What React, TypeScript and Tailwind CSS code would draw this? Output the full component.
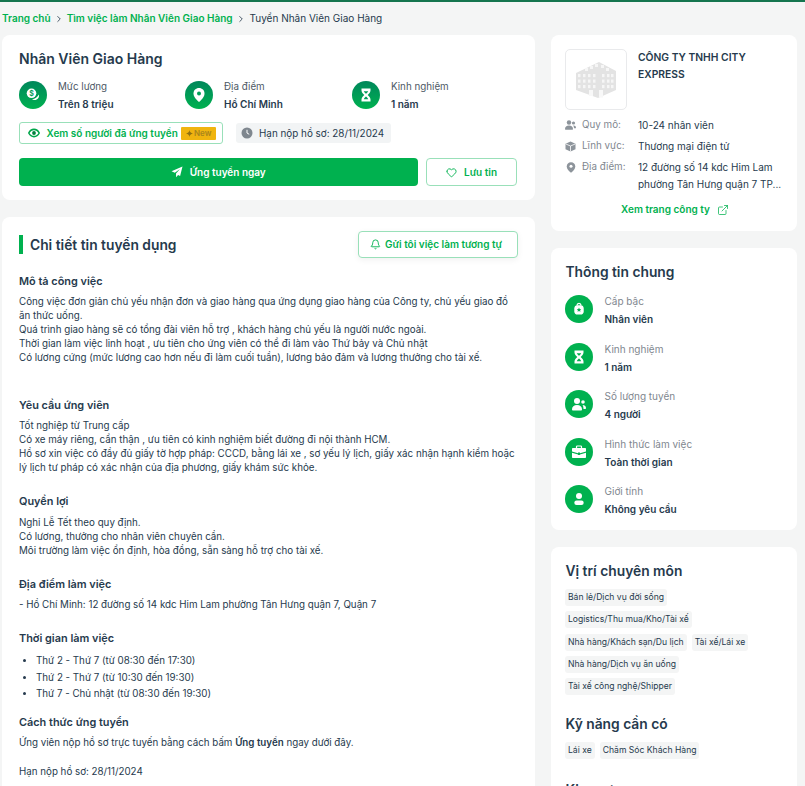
import React from "react";
import { Heart, Bell, ExternalLink, ChevronRight } from "lucide-react";

function Circle({ children, grad = false }: { children: React.ReactNode; grad?: boolean }) {
  return (
    <div
      className={
        grad
          ? "w-[28px] h-[28px] rounded-full shrink-0 flex items-center justify-center bg-gradient-to-b from-[#00875a] to-[#00b14f]"
          : "w-[28px] h-[28px] rounded-full shrink-0 flex items-center justify-center bg-[#00b14f]"
      }
    >
      {children}
    </div>
  );
}

const Money = () => (
  <svg width="16" height="16" viewBox="0 0 16 16">
    <circle cx="6.500" cy="6.300" r="4.800" fill="#fff" />
    <text x="6.500" y="8.800" fontSize="7" fontWeight="700" textAnchor="middle" fill="#00a05a" fontFamily="Inter">$</text>
    <path d="M13.800 7.500c1 2.800-1.400 5.800-4.500 5.600-1-.1-1.700-.4-2.300-.9 2.900.1 5.500-2 6.800-4.700z" fill="#fff" />
  </svg>
);
const Pin = () => (
  <svg width="14" height="16" viewBox="0 0 14 16">
    <path d="M7 1c3.200 0 5.500 2.400 5.500 5.400 0 3.200-3 6.600-5.500 8.600C4.500 13 1.500 9.600 1.500 6.400 1.500 3.400 3.800 1 7 1z" fill="#fff" />
    <circle cx="7" cy="6.500" r="2" fill="#00a05a" />
  </svg>
);
const Hourglass = ({ c = "#00a05a" }: { c?: string }) => (
  <svg width="14" height="16" viewBox="0 0 14 16">
    <path d="M2.500 1.500h9v2c0 2-1.500 3.200-2.800 4.500 1.300 1.300 2.800 2.500 2.800 4.500v2h-9v-2c0-2 1.500-3.200 2.800-4.500C4 6.700 2.500 5.500 2.500 3.500z" fill="#fff" />
    <path d="M4.800 4.200h4.400c-.3.900-1.300 1.700-2.200 2.500-.9-.8-1.900-1.600-2.200-2.500zM4.800 12.300c.3-1 1.300-1.900 2.200-2.700.9.800 1.900 1.700 2.200 2.700z" fill={c} />
  </svg>
);
const Rank = () => (
  <svg width="12" height="14" viewBox="0 0 14 16">
    <path d="M4.500 4C4.700 2.300 5.500 1.500 7 1.500s2.300.8 2.500 2.500" fill="none" stroke="#fff" strokeWidth="1.400" />
    <rect x="1.500" y="3.500" width="11" height="11" rx="4" fill="#fff" />
    <path d="M7 6.300l.8 1.700 1.800.2-1.300 1.200.4 1.800L7 10.300l-1.700.9.400-1.800-1.300-1.200 1.800-.2z" fill="#00b14f" />
  </svg>
);
const People = () => (
  <svg width="16" height="16" viewBox="0 0 16 16">
    <circle cx="6" cy="5" r="3" fill="#fff" />
    <path d="M1 13.500c0-3 2-4.500 5-4.500s5 1.500 5 4.500c0 .5-.5 1-1 1H2c-.5 0-1-.5-1-1z" fill="#fff" />
    <circle cx="12" cy="6" r="1.800" fill="#fff" />
    <path d="M11.500 9c2 0 3.500 1 3.500 3 0 .5-.3 1-.8 1H12.500c0-1.500-.3-3-1-4z" fill="#fff" />
  </svg>
);
const Case = () => (
  <svg width="16" height="16" viewBox="0 0 16 16">
    <path d="M5.500 4V2.800c0-.5.4-.8.800-.8h3.400c.4 0 .8.300.8.800V4" fill="none" stroke="#fff" strokeWidth="1.200" />
    <path d="M2 4h12c.6 0 1 .4 1 1v2.500L9 9.200V8.500H7v.7L1 7.500V5c0-.6.400-1 1-1z" fill="#fff" />
    <path d="M1 8.700l6 1.700v.6h2v-.6l6-1.700V13c0 .6-.4 1-1 1H2c-.6 0-1-.4-1-1z" fill="#fff" />
  </svg>
);
const Person = () => (
  <svg width="14" height="16" viewBox="0 0 14 16">
    <circle cx="7" cy="5" r="3" fill="#fff" />
    <rect x="2.300" y="9.500" width="9.400" height="4.500" rx="2.250" fill="#fff" />
  </svg>
);
const EyeSolid = () => (
  <svg width="12" height="12" viewBox="0 0 12 12">
    <path d="M.8 6C2 3.600 3.800 2.400 6 2.400S10 3.600 11.200 6C10 8.400 8.200 9.600 6 9.600S2 8.400.8 6z" fill="none" stroke="#00a54a" strokeWidth="1.600" />
    <circle cx="6" cy="6" r="1.900" fill="#00813c" />
  </svg>
);
const Plane = () => (
  <svg width="12" height="12" viewBox="0 0 12 12">
    <path d="M11.500.5L.5 5.200l3.300 1.600L9 3 5 7.500l.1 3.800 2-2.300 2 1z" fill="#fff" />
  </svg>
);
const ClockSolid = () => (
  <svg width="12" height="12" viewBox="0 0 12 12">
    <circle cx="6" cy="6" r="5.500" fill="#7f878f" />
    <path d="M6 2.800V6l2.200 1.300" fill="none" stroke="#fff" strokeWidth="1" />
  </svg>
);
const SmUsers = () => (
  <svg width="11" height="10" viewBox="0 0 11 10">
    <circle cx="4" cy="2.500" r="2.200" fill="#8d949b" />
    <path d="M0 9c0-2.300 1.500-3.500 4-3.500S8 6.700 8 9c0 .4-.2.700-.6.700H.6C.2 9.700 0 9.400 0 9z" fill="#8d949b" />
    <circle cx="8.500" cy="3" r="1.600" fill="#8d949b" />
    <path d="M8.500 5.500c1.500 0 2.500.8 2.500 2.200 0 .4-.2.600-.6.600H9c0-1-.2-2-.9-2.800z" fill="#8d949b" />
  </svg>
);
const SmBox = () => (
  <svg width="11" height="11" viewBox="0 0 11 11">
    <path d="M5.500.5l5 2.200v5.600l-5 2.200-5-2.200V2.700z" fill="#8d949b" />
    <path d="M.8 3l4.700 2 4.700-2M5.500 5v5.500" fill="none" stroke="#fff" strokeWidth=".8" />
  </svg>
);
const SmPin = () => (
  <svg width="10" height="11" viewBox="0 0 10 11">
    <path d="M5 .3c2.500 0 4.300 1.800 4.300 4.100C9.300 6.800 7 9.200 5 10.800 3 9.200.7 6.800.7 4.400.7 2.100 2.500.3 5 .3z" fill="#8d949b" />
    <circle cx="5" cy="4.300" r="1.500" fill="#fff" />
  </svg>
);
const Spark = () => (
  <svg width="7" height="7" viewBox="0 0 8 8" className="shrink-0">
    <path d="M4 0c.2 2.200 1.400 3.700 4 4-2.600.3-3.800 1.800-4 4-.2-2.200-1.400-3.700-4-4 2.600-.3 3.800-1.800 4-4z" fill="#8f7012" />
  </svg>
);
const Building = () => (
  <svg width="42" height="38" viewBox="0 0 42 38">
    <path d="M1 12 24 1l17 9v19l-18 8L1 29z" fill="#e3e3e3" />
    {[0, 1, 2].map((r) =>
      [3, 8, 13, 18, 27, 32, 36].map((x) => <rect key={`${r}-${x}`} x={x} y={13 + r * 5.500} width="2.500" height="3.200" fill="#f6f6f6" />)
    )}
    <path d="M10 7h3v3h-3zM15 5h3v3h-3zM20 3h3v3h-3zM26 4h3v3h-3zM31 7h3v3h-3z" fill="#f6f6f6" />
    <rect x="24" y="29" width="4" height="7.500" fill="#f8f8f8" />
    <rect x="14" y="29" width="4" height="6" fill="#f8f8f8" />
  </svg>
);

function Meta({ icon, label, value, className }: { icon: React.ReactNode; label: string; value: string; className: string }) {
  return (
    <div className={`flex items-center gap-[11px] h-[28px] ${className}`}>
      <Circle grad>{icon}</Circle>
      <div>
        <div className="text-[9.800px] leading-[14px] text-[#4d5965]">{label}</div>
        <div className="text-[10px] leading-[14px] mt-[3px] font-semibold text-[#263a4d]">{value}</div>
      </div>
    </div>
  );
}

function Info({ icon, label, value }: { icon: React.ReactNode; label: string; value: string }) {
  return (
    <div className="flex items-center gap-[11.500px] h-[28px]">
      <Circle>{icon}</Circle>
      <div className="pt-[2px]">
        <div className="text-[10px] leading-[14px] text-[#7f878f]">{label}</div>
        <div className="text-[10px] leading-[14px] mt-[4px] font-semibold text-[#263a4d]">{value}</div>
      </div>
    </div>
  );
}

function Tag({ children }: { children: React.ReactNode }) {
  return <span className="h-[17px] px-[3px] flex items-center rounded-[3px] bg-[#f4f5f5] text-[8.600px] text-[#263a4d] whitespace-nowrap">{children}</span>;
}

function H({ children, className = "" }: { children: React.ReactNode; className?: string }) {
  return <h3 className={`text-[10.900px] leading-[14px] font-semibold text-[#263a4d] ${className}`}>{children}</h3>;
}

function P({ children, className = "" }: { children: React.ReactNode; className?: string }) {
  return <div className={`text-[9.770px] leading-[14px] text-[#263a4d] ${className}`}>{children}</div>;
}

function CompanyRow({ icon, label, children }: { icon: React.ReactNode; label: string; children: React.ReactNode }) {
  return (
    <div className="flex">
      <div className="w-[73px] shrink-0 flex items-center gap-[6px] h-[16px] text-[9.800px] text-[#7f878f]">
        <span className="w-[11px] flex justify-center">{icon}</span>
        <span>{label}</span>
      </div>
      <div className="text-[10px] leading-[16.500px] text-[#263a4d]">{children}</div>
    </div>
  );
}

export default function App() {
  return (
    <div className="h-[786px] overflow-hidden bg-[#f4f5f5] font-['Inter',sans-serif]">
      <div className="h-[2px] bg-[#15754f]" />
      <nav className="h-[33px] pl-[2px] flex items-center text-[10px] font-semibold">
        <span className="text-[#00b14f]">Trang chủ</span>
        <ChevronRight className="w-[10px] h-[10px] mx-[3px] text-[#263a4d]" />
        <span className="text-[#00b14f]">Tìm việc làm Nhân Viên Giao Hàng</span>
        <ChevronRight className="w-[10px] h-[10px] mx-[3.500px] text-[#263a4d]" />
        <span className="text-[#263a4d] font-normal">Tuyển Nhân Viên Giao Hàng</span>
      </nav>
      <div className="flex pl-[2px] gap-[16px] items-start">
        <main className="w-[533px] shrink-0 flex flex-col gap-[17px]">
          <section className="h-[165px] bg-white rounded-lg px-[17px] pt-[15px]">
            <h1 className="text-[14px] leading-[18px] font-semibold text-[#263a4d]">Nhân Viên Giao Hàng</h1>
            <div className="flex mt-[13px]">
              <Meta className="w-[166px]" icon={<Money />} label="Mức lương" value="Trên 8 triệu" />
              <Meta className="w-[167px]" icon={<Pin />} label="Địa điểm" value="Hồ Chí Minh" />
              <Meta className="" icon={<Hourglass />} label="Kinh nghiệm" value="1 năm" />
            </div>
            <div className="flex mt-[13px] items-center">
              <div className="h-[22px] w-[204px] rounded-[3px] border border-[#99e0b9] flex items-center pl-[8px] gap-[6.500px]">
                <EyeSolid />
                <span className="text-[10px] font-semibold text-[#00b14f] whitespace-nowrap">Xem số người đã ứng tuyển</span>
                <span className="ml-[-3px] h-[13px] w-[35px] rounded-[1px] bg-[#f0b40f] text-[8px] font-semibold text-[#a9851c] flex items-center justify-center gap-[1px] shrink-0">
                  <Spark />New
                </span>
              </div>
              <div className="ml-[13px] h-[20px] w-[155px] rounded-[3px] bg-[#f2f4f5] flex items-center pl-[5px] gap-[6px]">
                <ClockSolid />
                <span className="text-[9.900px] text-[#263a4d] whitespace-nowrap">Hạn nộp hồ sơ: 28/11/2024</span>
              </div>
            </div>
            <div className="flex mt-[14px] gap-[8px]">
              <button className="h-[28px] w-[399px] rounded-[4px] bg-[#00b14f] text-white flex items-center justify-center gap-[6.500px] text-[10px] font-semibold">
                <Plane />
                Ứng tuyển ngay
              </button>
              <button className="h-[28px] w-[91px] rounded-[4px] border border-[#99e0b9] bg-white text-[#00b14f] flex items-center justify-center gap-[7px] text-[10px] font-semibold">
                <Heart className="w-[11px] h-[11px]" strokeWidth={2} />
                Lưu tin
              </button>
            </div>
          </section>

          <section className="h-[600px] bg-white rounded-lg px-[17px] pt-[14px]">
            <div className="flex items-center justify-between h-[27px]">
              <div className="flex items-center gap-[7px]">
                <div className="w-[4px] h-[19px] bg-[#00b14f]" />
                <h2 className="text-[13.800px] leading-[21px] pt-[1px] font-semibold text-[#263a4d]">Chi tiết tin tuyển dụng</h2>
              </div>
              <div className="h-[27px] w-[160px] pr-[4px] rounded-[4px] border border-[#99e0b9] bg-white shadow-[0_2px_6px_rgba(0,0,0,0.06)] flex items-center justify-center gap-[4px] text-[10px] font-semibold text-[#00b14f]">
                <Bell className="w-[11px] h-[11px]" strokeWidth={2} />
                Gửi tôi việc làm tương tự
              </div>
            </div>
            <H className="mt-[16px]">Mô tả công việc</H>
            <P className="mt-[7px]">
              Công việc đơn giản chủ yếu nhận đơn và giao hàng qua ứng dụng giao hàng của Công ty, chủ yếu giao đồ
              <br />ăn thức uống.
              <br />Quá trình giao hàng sẽ có tổng đài viên hỗ trợ , khách hàng chủ yếu là người nước ngoài.
              <br />Thời gian làm việc linh hoạt , ưu tiên cho ứng viên có thể đi làm vào Thứ bảy và Chủ nhật
              <br />Có lương cứng (mức lương cao hơn nếu đi làm cuối tuần), lương bảo đảm và lương thưởng cho tài xế.
            </P>
            <H className="mt-[33px]">Yêu cầu ứng viên</H>
            <P className="mt-[7px]">
              Tốt nghiệp từ Trung cấp
              <br />Có xe máy riêng, cẩn thận , ưu tiên có kinh nghiệm biết đường đi nội thành HCM.
              <br />Hồ sơ xin việc có đầy đủ giấy tờ hợp pháp: CCCD, bằng lái xe , sơ yếu lý lịch, giấy xác nhận hạnh kiểm hoặc
              <br />lý lịch tư pháp có xác nhận của địa phương, giấy khám sức khỏe.
            </P>
            <H className="mt-[19px]">Quyền lợi</H>
            <P className="mt-[8px]">
              Nghỉ Lễ Tết theo quy định.
              <br />Có lương, thưởng cho nhân viên chuyên cần.
              <br />Môi trường làm việc ổn định, hòa đồng, sẵn sàng hỗ trợ cho tài xế.
            </P>
            <H className="mt-[19px]">Địa điểm làm việc</H>
            <P className="mt-[7px]">- Hồ Chí Minh: 12 đường số 14 kdc Him Lam phường Tân Hưng quận 7, Quận 7</P>
            <H className="mt-[19px]">Thời gian làm việc</H>
            <ul className="mt-[8px] pl-[17px] list-disc text-[9.770px] leading-[16.500px] text-[#263a4d]">
              <li>Thứ 2 - Thứ 7 (từ 08:30 đến 17:30)</li>
              <li>Thứ 2 - Thứ 7 (từ 10:30 đến 19:30)</li>
              <li>Thứ 7 - Chủ nhật (từ 08:30 đến 19:30)</li>
            </ul>
            <H className="mt-[12px]">Cách thức ứng tuyển</H>
            <P className="mt-[7px]">
              Ứng viên nộp hồ sơ trực tuyến bằng cách bấm <b className="font-semibold">Ứng tuyển</b> ngay dưới đây.
            </P>
            <P className="mt-[15px]">Hạn nộp hồ sơ: 28/11/2024</P>
          </section>
        </main>

        <aside className="w-[246px] shrink-0 flex flex-col gap-[17px]">
          <section className="h-[196px] bg-white rounded-lg px-[14px] pt-[14px]">
            <div className="flex gap-[11px]">
              <div className="w-[62px] h-[61px] rounded-[5px] border border-[#e9eaec] flex items-center justify-center shrink-0">
                <Building />
              </div>
              <div className="text-[10.300px] leading-[17px] font-semibold text-[#263a4d]">CÔNG TY TNHH CITY EXPRESS</div>
            </div>
            <div className="mt-[7px] flex flex-col gap-[4.500px]">
              <CompanyRow icon={<SmUsers />} label="Quy mô:">10-24 nhân viên</CompanyRow>
              <CompanyRow icon={<SmBox />} label="Lĩnh vực:">Thương mại điện tử</CompanyRow>
              <CompanyRow icon={<SmPin />} label="Địa điểm:">
                12 đường số 14 kdc Him Lam
                <br />
                phường Tân Hưng quận 7 TP...
              </CompanyRow>
            </div>
            <div className="mt-[10px] pl-[2px] flex items-center justify-center gap-[7px] text-[10px] font-semibold text-[#00b14f]">
              Xem trang công ty
              <ExternalLink className="w-[12px] h-[12px]" strokeWidth={1.500} />
            </div>
          </section>

          <section className="h-[282px] bg-white rounded-lg px-[14px] pt-[14px]">
            <h2 className="pl-[0.500px] text-[13.800px] leading-[20px] font-semibold text-[#263a4d]">Thông tin chung</h2>
            <div className="mt-[13px] flex flex-col gap-[19.600px]">
              <Info icon={<Rank />} label="Cấp bậc" value="Nhân viên" />
              <Info icon={<Hourglass c="#00b14f" />} label="Kinh nghiệm" value="1 năm" />
              <Info icon={<People />} label="Số lượng tuyển" value="4 người" />
              <Info icon={<Case />} label="Hình thức làm việc" value="Toàn thời gian" />
              <Info icon={<Person />} label="Giới tính" value="Không yêu cầu" />
            </div>
          </section>

          <section className="h-[260px] bg-white rounded-lg px-[14px] pt-[14px]">
            <h2 className="pl-[0.500px] text-[13.800px] leading-[20px] font-semibold text-[#263a4d]">Vị trí chuyên môn</h2>
            <div className="mt-[8px] flex flex-col gap-[5.300px]">
              <div className="flex"><Tag>Bán lẻ/Dịch vụ đời sống</Tag></div>
              <div className="flex"><Tag>Logistics/Thu mua/Kho/Tài xế</Tag></div>
              <div className="flex gap-[5px]"><Tag>Nhà hàng/Khách sạn/Du lịch</Tag><Tag>Tài xế/Lái xe</Tag></div>
              <div className="flex"><Tag>Nhà hàng/Dịch vụ ăn uống</Tag></div>
              <div className="flex"><Tag>Tài xế công nghệ/Shipper</Tag></div>
            </div>
            <h2 className="pl-[0.500px] mt-[19px] text-[13.800px] leading-[20px] font-semibold text-[#263a4d]">Kỹ năng cần có</h2>
            <div className="mt-[8px] flex gap-[5px]">
              <Tag>Lái xe</Tag>
              <Tag>Chăm Sóc Khách Hàng</Tag>
            </div>
            <h2 className="pl-[0.500px] mt-[21px] text-[13.800px] leading-[20px] font-semibold text-[#263a4d]">Khu vực</h2>
          </section>
        </aside>
      </div>
    </div>
  );
}
